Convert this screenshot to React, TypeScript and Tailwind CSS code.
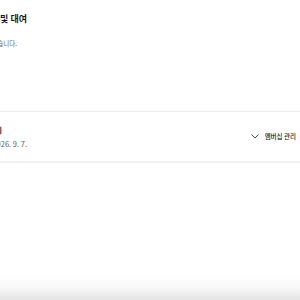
const font = { fontFamily: '"Noto Sans CJK KR", "Noto Sans", sans-serif' };

function Chevron() {
  return (
    <svg width="8" height="5" viewBox="0 0 8 5" fill="none" stroke="#333" strokeWidth="0.9" className="shrink-0">
      <path d="M0.5 0.5 L4 4 L7.5 0.5" />
    </svg>
  );
}

export default function App() {
  return (
    <div className="h-[300px] w-[300px] overflow-hidden bg-white flex flex-col antialiased" style={font}>
      {/* Section header */}
      <div className="pt-[13px] h-[111px] flex flex-col">
        <div className="w-[27px] flex justify-end whitespace-nowrap text-[9px] leading-[11px] font-bold text-[#1a1a1a]">
          구매 및 대여
        </div>
        <div className="mt-[15px] w-[17px] flex justify-end whitespace-nowrap text-[6.5px] leading-[9px] text-[#5f5f5f]">
          구매하거나 대여한 콘텐츠를 확인할 수 있습니다.
        </div>
      </div>

      <div className="h-px bg-[#eeeeee]" />

      {/* Membership row */}
      <div className="h-[49px] flex items-center justify-between pr-[4px]">
        <div className="flex flex-col gap-[4px]">
          <div className="w-[2px] flex justify-end whitespace-nowrap text-[7px] leading-[9px] font-bold text-[#1a1a1a]">
            YouTube Premium 패밀리
          </div>
          <div className="w-[27px] flex justify-end whitespace-nowrap text-[7.5px] leading-[9px] text-[#5f5f5f]">
            다음 결제일: 2026. 9. 7.
          </div>
        </div>
        <div className="flex items-center gap-[6px] text-[6.5px] leading-[9px] font-medium text-[#1a1a1a]">
          <Chevron />
          <span>멤버십 관리</span>
        </div>
      </div>

      <div className="h-[2px] bg-[#f2f2f2]" />

      <div className="flex-1" />
      {/* Shadow of panel below */}
      <div className="h-[24px] bg-gradient-to-b from-white via-[#f7f7f7] to-[#e4e4e4]" />
    </div>
  );
}
